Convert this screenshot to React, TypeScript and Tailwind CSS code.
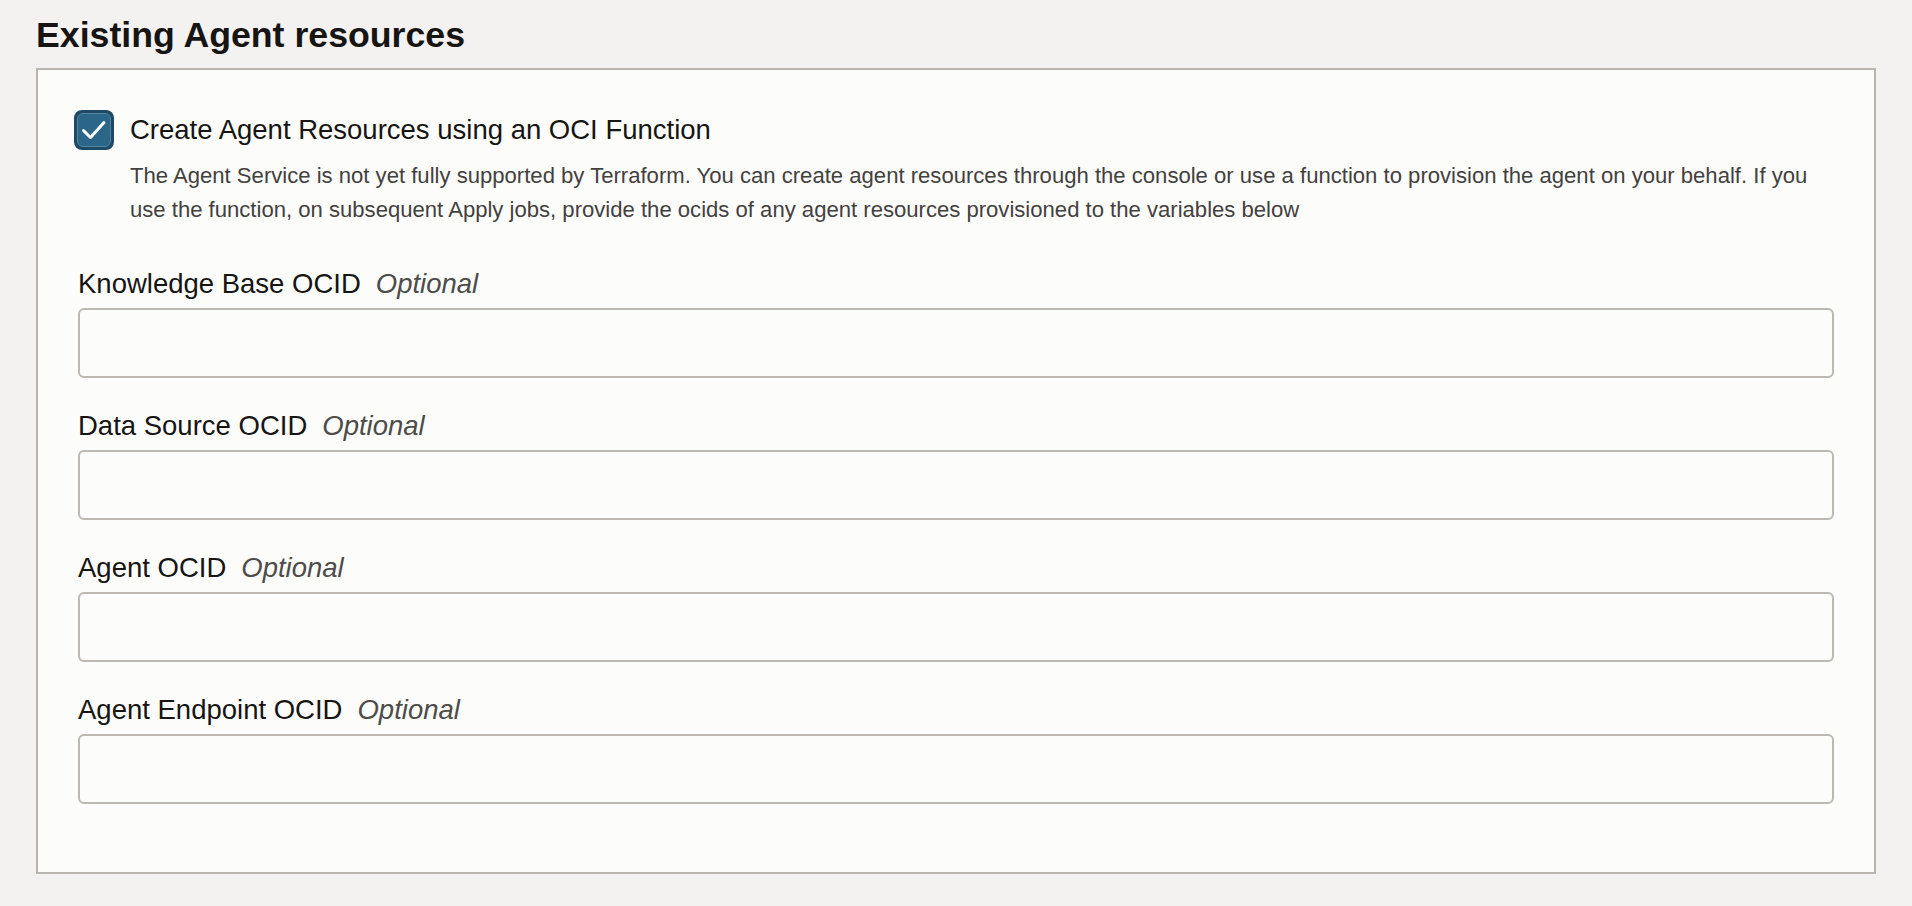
import { useState } from 'react';

const fields = ['Knowledge Base OCID', 'Data Source OCID', 'Agent OCID', 'Agent Endpoint OCID'];

function CheckBox({ checked, onToggle }: { checked: boolean; onToggle: () => void }) {
  return (
    <button
      type="button"
      onClick={onToggle}
      className="flex h-[40px] w-[40px] shrink-0 items-center justify-center rounded-[8px] bg-[#1f4a66] p-[3px]"
    >
      <span className="flex h-full w-full items-center justify-center rounded-[6px] border border-[#4f84a3] bg-[#2b6587]">
        {checked && (
          <svg width="40" height="40" viewBox="0 0 40 40" className="shrink-0">
            <path d="M9.5 20.5 L16.5 27.5 L30 12.5" fill="none" stroke="#ffffff" strokeWidth="3" strokeLinecap="round" strokeLinejoin="round" />
          </svg>
        )}
      </span>
    </button>
  );
}

export default function App() {
  const [useFunction, setUseFunction] = useState(true);
  const [values, setValues] = useState<string[]>(['', '', '', '']);

  return (
    <div className="min-h-screen bg-[#f3f2f1] px-[36px] pt-[15px] pb-[32px]" style={{ fontFamily: '"Liberation Sans", Arial, sans-serif' }}>
      <h2 className="mb-[13px] text-[35.7px] font-bold leading-[40px] text-[#161513]">Existing Agent resources</h2>

      <div className="border-2 border-[#b9b6af] bg-[#fcfcfb] px-[40px] pt-[40px] pb-[68px]">
        <div className="-ml-[4px] flex gap-[16px]">
          <CheckBox checked={useFunction} onToggle={() => setUseFunction(!useFunction)} />
          <div className="flex flex-col">
            <span className="text-[27.5px] leading-[40px] text-[#161513]">Create Agent Resources using an OCI Function</span>
            <p className="mt-[9px] text-[22.1px] leading-[34px] text-[#43413e]">
              The Agent Service is not yet fully supported by Terraform. You can create agent resources through the console or use a function to provision the agent on your behalf. If you use the function, on subsequent Apply jobs, provide the ocids of any agent resources provisioned to the variables below
            </p>
          </div>
        </div>

        <div className="mt-[41px] flex flex-col gap-[32px]">
          {fields.map((label, i) => (
            <div key={label} className="flex flex-col">
              <label className="mb-[8px] flex items-baseline text-[27.5px] leading-[32px] text-[#161513]">
                {label}
                <span className="ml-[15px] italic text-[#4e4c49]">Optional</span>
              </label>
              <input
                value={values[i]}
                onChange={(e) => setValues(values.map((v, j) => (j === i ? e.target.value : v)))}
                className="h-[70px] rounded-[6px] border-2 border-[#bcb9b2] bg-[#fcfcfb] px-[16px] text-[24px] text-[#161513] outline-none"
              />
            </div>
          ))}
        </div>
      </div>
    </div>
  );
}
